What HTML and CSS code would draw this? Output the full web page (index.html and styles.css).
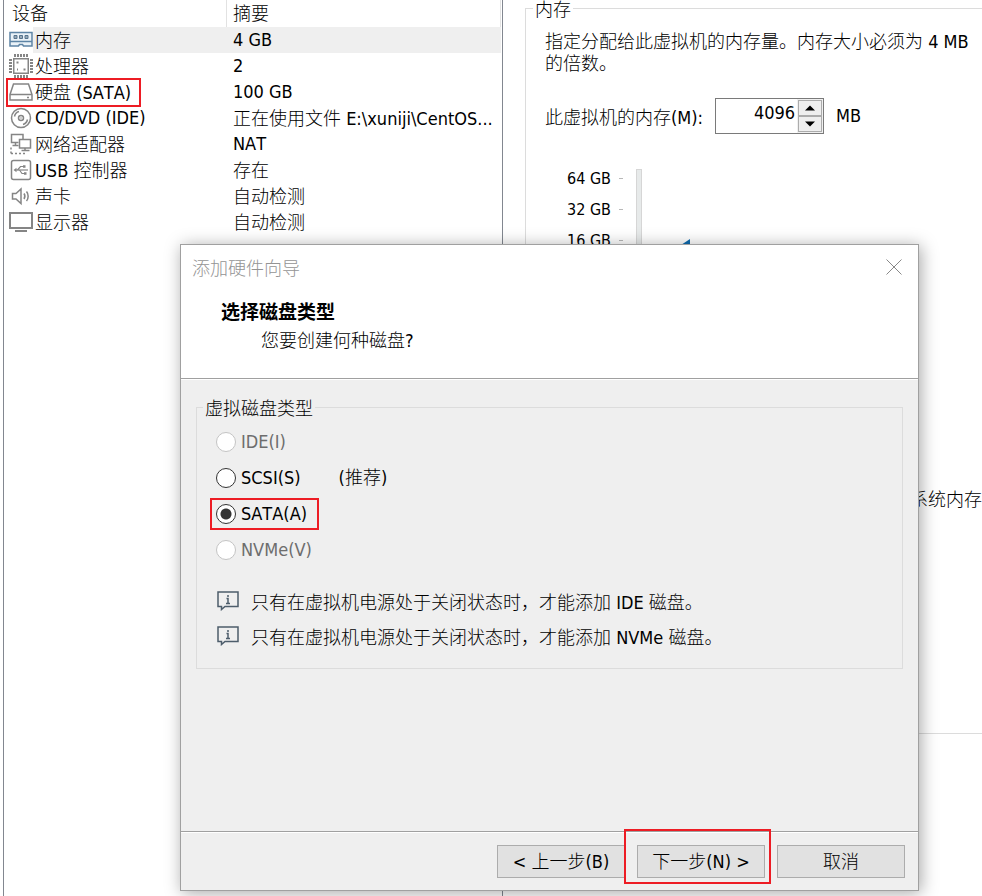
FILE: index.html
```html
<!DOCTYPE html>
<html lang="zh-CN">
<head>
<meta charset="utf-8">
<title>添加硬件向导</title>
<link rel="stylesheet" href="styles.css">
</head>
<body>
<main class="settings">
  <section class="devices">
    <table class="device-table">
      <thead>
        <tr><th class="col-name">设备</th><th class="col-info">摘要</th></tr>
      </thead>
      <tbody>
        <tr class="selected">
          <td><span class="device"><svg class="icon" viewBox="0 0 24 24"><path d="M1 4.500H23V18H14.500L13.500 16.500H10.500L9.500 18H1Z" fill="#eaf2f8" stroke="#5d84a5" stroke-width="1.500"/><path d="M5 7.500h3v3H5zM10.500 7.500h3v3h-3zM16 7.500h3v3h-3z" fill="#9aaab8" stroke="#56748e"/><path d="M1 13.500h22" stroke="#5d84a5" stroke-width="1.500"/></svg><span class="name">内存</span></span></td>
          <td class="latin">4 GB</td>
        </tr>
        <tr>
          <td><span class="device"><svg class="icon" viewBox="0 0 24 24" fill="none" stroke="#858585"><rect x="4.750" y="4.750" width="14.500" height="14.500" stroke-width="1.500"/><path d="M5 1.500h14M5 22.500h14M1.500 5v14M22.500 5v14" stroke-width="3" stroke-dasharray="2 1"/><path d="M7.500 8.500h2M14.500 15.500h2M8 15.500h1" stroke-width="2"/></svg><span class="name">处理器</span></span></td>
          <td class="latin">2</td>
        </tr>
        <tr>
          <td><span class="device marked"><svg class="icon" viewBox="0 0 24 24" fill="none" stroke="#858585" stroke-width="1.500"><path d="M1 14.500 4.500 4h15L23 14.500v5.500H1Z"/><path d="M1 14.500h22M18 17.500h2"/></svg><span class="name">硬盘<span class="latin"> (SATA)</span></span></span></td>
          <td class="latin">100 GB</td>
        </tr>
        <tr>
          <td><span class="device"><svg class="icon" viewBox="0 0 24 24" fill="none" stroke="#858585" stroke-width="1.500"><circle cx="12" cy="12" r="9.500"/><circle cx="12" cy="12" r="2.500"/><path d="M11.500 12h1M5.500 10.500c.5-2.500 2-4.300 4.500-5M18.500 13.500c-.5 2.500-2 4.300-4.500 5"/></svg><span class="name latin">CD/DVD (IDE)</span></span></td>
          <td>正在使用文件<span class="latin"> E:\xuniji\CentOS...</span></td>
        </tr>
        <tr>
          <td><span class="device"><svg class="icon" viewBox="0 0 24 24" fill="none" stroke="#858585" stroke-width="1.500"><path d="M9.500 10.500H2.500v-8h11.500v5M6.500 10.500v3M3.500 13.500h6"/><path d="M10.500 7.500h11v8.500h-11zM16 16v3M12.500 18.500h8"/><path d="M2 15.500v6M2 21.500h14" stroke-dasharray="2 2"/></svg><span class="name">网络适配器</span></span></td>
          <td class="latin">NAT</td>
        </tr>
        <tr>
          <td><span class="device"><svg class="icon" viewBox="0 0 24 24" fill="none" stroke="#858585" stroke-width="1.500"><rect x="2.500" y="2.500" width="19" height="19" rx="2"/><path d="M6 12h13" stroke-width="1.200"/><path d="M8.500 12 11.500 8.500h3M10.500 12l2.500 3.500h3" stroke-width="1.200"/><path d="M4.500 12l3-2.200v4.400zM14 7.300h2.500v2.500H14zM15 14.300h2.500v2.500H15z" fill="#858585" stroke="none"/></svg><span class="name"><span class="latin">USB </span>控制器</span></span></td>
          <td>存在</td>
        </tr>
        <tr>
          <td><span class="device"><svg class="icon" viewBox="0 0 24 24" fill="none" stroke="#858585" stroke-width="1.500"><path d="M3.500 9.500H7L12 5v14.500L7 15H3.500ZM15 9.500c1 1.500 1 4 0 5.500M17.500 7.500c2.200 2.500 2.200 7 0 9.500"/></svg><span class="name">声卡</span></span></td>
          <td>自动检测</td>
        </tr>
        <tr>
          <td><span class="device"><svg class="icon" viewBox="0 0 24 24" fill="none" stroke="#858585" stroke-width="2"><path d="M1 3h22v15H1zM6 21h12"/></svg><span class="name">显示器</span></span></td>
          <td>自动检测</td>
        </tr>
      </tbody>
    </table>
  </section>

  <section class="details">
    <fieldset class="memory">
      <legend>内存</legend>
      <p class="description">指定分配给此虚拟机的内存量。内存大小必须为<span class="latin"> 4 MB </span>的倍数。</p>
      <div class="amount">
        <label for="memory">此虚拟机的内存<span class="latin">(M):</span></label>
        <div class="spinner">
          <input class="latin" id="memory" type="text" inputmode="numeric" value="4096">
          <div class="steps">
            <button type="button" aria-label="增加"><svg viewBox="0 0 10 6"><path d="M0 5.500 5 .5l5 5Z"/></svg></button>
            <button type="button" aria-label="减少"><svg viewBox="0 0 10 6"><path d="M0 .5 5 5.500l5-5Z"/></svg></button>
          </div>
        </div>
        <span class="latin">MB</span>
      </div>
      <div class="scale">
        <ul class="marks latin">
          <li>64 GB</li>
          <li>32 GB</li>
          <li>16 GB</li>
        </ul>
        <input class="track" type="range" min="0" max="64" value="4" aria-label="内存">
        <svg class="pointer" viewBox="0 0 16 16"><path d="M0 8 12 0v16Z"/></svg>
        <span class="hint">系统内存</span>
      </div>
    </fieldset>
  </section>
</main>

<div class="dialog" role="dialog" aria-labelledby="dialog-title">
  <div class="titlebar">
    <span id="dialog-title">添加硬件向导</span>
    <button class="close" type="button" aria-label="关闭"><svg viewBox="0 0 16 16"><path d="M.5.500l15 15M15.500.500l-15 15"/></svg></button>
  </div>
  <header class="intro">
    <h1>选择磁盘类型</h1>
    <p>您要创建何种磁盘<b class="latin">?</b></p>
  </header>
  <div class="content">
    <fieldset class="types">
      <legend>虚拟磁盘类型</legend>
      <div class="options latin">
        <div class="option"><input type="radio" name="type" id="ide" disabled><label for="ide">IDE(I)</label></div>
        <div class="option"><input type="radio" name="type" id="scsi"><label for="scsi">SCSI(S)</label><span class="recommended">(<span class="cjk">推荐</span>)</span></div>
        <div class="option marked"><input type="radio" name="type" id="sata" checked><label for="sata">SATA(A)</label></div>
        <div class="option"><input type="radio" name="type" id="nvme" disabled><label for="nvme">NVMe(V)</label></div>
      </div>
      <div class="notes">
        <p><svg class="info" viewBox="0 0 22 20"><path d="M1 1h20v14.500H8L4.500 18.500v-3H1Z"/><path d="M11 4v2M9.500 7.500H11V12M9 12.500h4"/></svg><span>只有在虚拟机电源处于关闭状态时，才能添加<span class="latin"> IDE </span>磁盘。</span></p>
        <p><svg class="info" viewBox="0 0 22 20"><path d="M1 1h20v14.500H8L4.500 18.500v-3H1Z"/><path d="M11 4v2M9.500 7.500H11V12M9 12.500h4"/></svg><span>只有在虚拟机电源处于关闭状态时，才能添加<span class="latin"> NVMe </span>磁盘。</span></p>
      </div>
    </fieldset>
  </div>
  <footer class="actions">
    <button type="button"><span class="latin">&lt; </span>上一步<span class="latin">(B)</span></button>
    <div class="marked"><button type="button">下一步<span class="latin">(N) &gt;</span></button></div>
    <button type="button">取消</button>
  </footer>
</div>
</body>
</html>
```
FILE: styles.css
```css
* { box-sizing: border-box; }

body {
  margin: 0;
  min-height: 100vh;
  position: relative;
  overflow: hidden;
  background: #fff;
  color: #000;
  font: 300 18px/24px "Noto Sans CJK SC", sans-serif;
  font-kerning: none;
}

.latin {
  font-family: "DejaVu Sans Condensed", "DejaVu Sans", "Noto Sans CJK SC", sans-serif;
  font-size: 18px;
  font-weight: 400;
}
span.latin, b.latin { line-height: 18px; }

.cjk { font: 300 18px/18px "Noto Sans CJK SC", sans-serif; }

button, input { font: inherit; color: inherit; }
svg { display: block; }
h1, p, ul { margin: 0; padding: 0; }
fieldset { margin: 0; padding: 0; border: 1px solid #dcdcdc; min-width: 0; }

/* Red highlight drawn around an item */
.marked { position: relative; }
.marked::after {
  content: "";
  position: absolute;
  border: 2px solid #ed1c24;
  pointer-events: none;
}

.settings {
  display: grid;
  grid-template-columns: 503px 1fr;
  min-height: 100vh;
}

.devices {
  margin-left: 3px;
  border-left: 1px solid #828790;
  border-right: 1px solid #828790;
}

.device-table {
  width: calc(100% - 1px);
  border-collapse: separate;
  border-spacing: 0;
  table-layout: fixed;
}
.device-table th {
  height: 27px;
  padding: 0 8px;
  border-right: 1px solid #e2e2e2;
  vertical-align: top;
  text-align: left;
  font-weight: 300;
}
.device-table .col-info { padding-left: 6px; }
.col-name { width: 223px; }
.device-table td {
  height: 26px;
  padding: 0;
  vertical-align: top;
  white-space: nowrap;
}
.device-table td + td { padding-left: 6px; }
.device-table td.latin, .device .name.latin { line-height: 26px; }
.selected td + td, .selected .name { background: #efefef; }

.device { display: flex; height: 26px; padding-left: 5px; }
.icon { width: 24px; height: 24px; flex: none; align-self: center; }
.name { flex: 1; padding-left: 2px; }
.device.marked { width: 137px; }
.device.marked::after { inset: -1px 0 -2px 2px; }

.memory {
  margin-left: 22px;
  height: 734px;
  border-right: 0;
  padding-left: 19px;
}
.memory legend {
  margin-left: -12px;
  padding: 0 2px;
  line-height: 17px;
}
.description { margin-top: 12px; padding-right: 8px; line-height: 22px; }
.amount { display: flex; align-items: center; gap: 12px; margin-top: 25px; }
.spinner {
  display: flex;
  width: 109px;
  height: 36px;
  border: 1px solid #7a7a7a;
}
.spinner input {
  flex: 1;
  width: 0;
  border: 0;
  padding: 0 2px 6px;
  outline: 0;
  background: none;
  text-align: right;
}
.steps { width: 26px; display: flex; flex-direction: column; padding: 1px; background: #f0f0f0; }
.steps button {
  flex: 1;
  display: flex;
  align-items: center;
  justify-content: center;
  padding: 0;
  border: 1px solid #acacac;
  background: #efefef;
}
.steps svg { width: 10px; height: 6px; }

.scale { display: flex; align-items: flex-start; margin-top: 29px; }
.marks { list-style: none; width: 78px; padding-left: 22px; }
.marks li {
  display: flex;
  align-items: center;
  justify-content: space-between;
  height: 31px;
  font-size: 16px;
}
.marks li::after { content: ""; width: 4px; height: 1px; background: #b8b8b8; }
.track {
  appearance: none;
  writing-mode: vertical-lr;
  width: 6px;
  height: 320px;
  margin: 6px 36px 0 13px;
  border: 1px solid #d6d6d6;
  background: #e7eaea;
}
.track::-webkit-slider-thumb { appearance: none; width: 4px; height: 1px; }
.pointer { width: 16px; height: 16px; margin-top: 76px; fill: #0f6cb0; }
.hint { margin: 323px 0 0 auto; }

.dialog {
  position: absolute;
  top: 244px;
  left: 180px;
  width: 739px;
  border: 1px solid #a0a0a0;
  background: #efefef;
  box-shadow: 2px 2px 16px rgba(0, 0, 0, .35);
}
.titlebar {
  display: flex;
  align-items: center;
  justify-content: space-between;
  height: 43px;
  padding: 0 16px 0 11px;
  background: #fff;
  color: #949494;
}
.close { padding: 0; border: 0; background: none; }
.close svg { width: 16px; height: 16px; fill: none; stroke: #888; }
.intro {
  height: 91px;
  padding: 9px 40px;
  border-bottom: 1px solid #a0a0a0;
  background: #fff;
}
.intro h1 { font-size: 19px; line-height: 28px; font-weight: 700; }
.intro p { padding-left: 40px; line-height: 28px; }

.content { height: 452px; padding: 16px 15px; border-top: 1px solid #fff; }
.types { padding: 0 20px 20px; }
.types legend { margin-left: -14px; padding: 0 2px; line-height: 22px; }
.options { display: grid; gap: 10px; padding-top: 11px; }
.option { display: flex; align-items: center; height: 26px; }
.option input {
  appearance: none;
  width: 20px;
  height: 20px;
  margin: 0 5px 0 -1px;
  border: 1px solid #333;
  border-radius: 50%;
  background: #fff;
}
.option input:checked { background: radial-gradient(circle, #333 5px, #fff 6px); }
.option input:disabled { border-color: #c4c4c4; }
.option input:disabled + label { color: #6d6d6d; }
.recommended { margin-left: 38px; }
.option.marked { width: 102px; }
.option.marked::after { inset: -3px 0 -3px -7px; }

.notes { display: grid; gap: 11px; padding-top: 26px; }
.notes p { display: flex; align-items: center; gap: 12px; height: 24px; }
.info { width: 22px; height: 20px; fill: none; stroke: #4d5d6b; stroke-width: 1.500; }

.actions {
  display: flex;
  justify-content: flex-end;
  gap: 12px;
  height: 59px;
  padding: 13px 13px 0;
  border-top: 1px solid #a0a0a0;
  box-shadow: inset 0 1px #fff;
}
.actions button {
  width: 128px;
  height: 33px;
  padding: 0 0 3px;
  border: 1px solid #acacac;
  background: #e1e1e1;
  white-space: pre;
}
.actions .marked { height: 33px; }
.actions .marked::after { inset: -16px -6px -6px -13px; }
```
